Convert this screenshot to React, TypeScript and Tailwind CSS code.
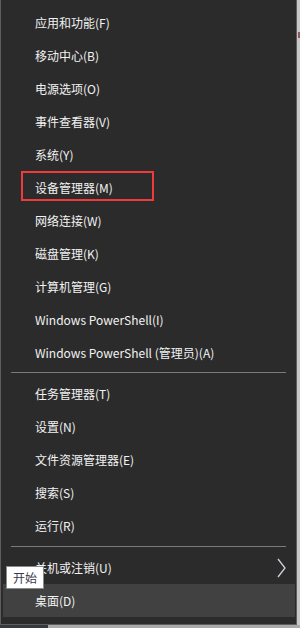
const groups: string[][] = [
  [
    "应用和功能(F)",
    "移动中心(B)",
    "电源选项(O)",
    "事件查看器(V)",
    "系统(Y)",
    "设备管理器(M)",
    "网络连接(W)",
    "磁盘管理(K)",
    "计算机管理(G)",
    "Windows PowerShell(I)",
    "Windows PowerShell (管理员)(A)",
  ],
  ["任务管理器(T)", "设置(N)", "文件资源管理器(E)", "搜索(S)", "运行(R)"],
];

const MenuRow = ({
  label,
  active,
  marked,
  submenu,
}: {
  label: string;
  active?: boolean;
  marked?: boolean;
  submenu?: boolean;
}) => (
  <div
    className={
      "relative ml-[2px] mr-[1px] flex h-[33px] items-center pl-[32px] text-[12px] text-[#f2f2f2] " +
      (active ? "bg-[#414141]" : "")
    }
  >
    <span className="leading-none">{label}</span>
    {marked && (
      <div className="absolute left-[18px] top-0 h-[30px] w-[133px] border-2 border-[#ef3b3b]" />
    )}
    {submenu && (
      <svg
        className="absolute right-[9px] top-[7px]"
        width="9"
        height="20"
        viewBox="0 0 9 20"
        fill="none"
      >
        <polyline points="1,1 8,10 1,19" stroke="#cfd3d8" strokeWidth="1.3" />
      </svg>
    )}
  </div>
);

const Separator = ({ top, bottom }: { top: string; bottom: string }) => (
  <div className={"mx-[10px] h-px bg-[#7a7a7a] " + top + " " + bottom} />
);

export default function App() {
  return (
    <div
      className="relative h-[628px] w-[300px] overflow-hidden bg-[#c8c8c8]"
      style={{ fontFamily: '"Noto Sans CJK SC", "Noto Sans", sans-serif' }}
    >
      <div className="flex h-[625px] w-[297px] flex-col border-x border-b border-[#5e5e5e] bg-[#2b2b2b] pt-[6px]">
        {groups[0].map((label) => (
          <MenuRow key={label} label={label} marked={label === "设备管理器(M)"} />
        ))}
        <Separator top="mt-[3px]" bottom="mb-[4px]" />
        {groups[1].map((label) => (
          <MenuRow key={label} label={label} />
        ))}
        <Separator top="mt-[4px]" bottom="mb-[4px]" />
        <MenuRow label="关机或注销(U)" submenu />
        <MenuRow label="桌面(D)" active />
      </div>

      <div className="flex h-[3px] w-full">
        <div className="h-full w-[48px] bg-[#34393d]" />
        <div className="h-full flex-1 bg-[#a9a9a9]" />
      </div>

      <div className="absolute right-0 top-[32px] h-[6px] w-[2px] bg-[#8a5a5a]" />

      <div className="absolute left-[6px] top-[566px] flex h-[23px] w-[38px] items-center justify-center border border-[#8a8a8a] bg-white text-[12px] text-[#3a3a4a]">
        开始
      </div>
    </div>
  );
}
